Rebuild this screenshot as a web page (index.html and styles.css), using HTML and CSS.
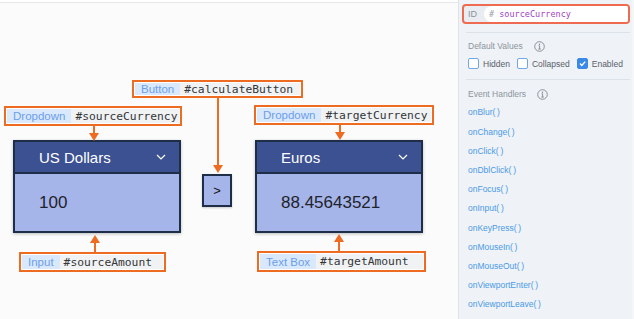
FILE: index.html
```html
<!DOCTYPE html>
<html>
<head>
<meta charset="utf-8">
<link rel="stylesheet" href="styles.css">
</head>
<body>
<div class="app">
  <main class="canvas">
    <div class="ruler"></div>

    <div class="tag tag-btn"><span class="tag-type">Button</span><span class="tag-id">#calculateButton</span></div>
    <div class="tag tag-src"><span class="tag-type">Dropdown</span><span class="tag-id">#sourceCurrency</span></div>
    <div class="tag tag-tgt"><span class="tag-type">Dropdown</span><span class="tag-id">#targetCurrency</span></div>
    <div class="tag tag-inp"><span class="tag-type">Input</span><span class="tag-id">#sourceAmount</span></div>
    <div class="tag tag-tb"><span class="tag-type">Text Box</span><span class="tag-id">#targetAmount</span></div>

    <div class="comp comp-src">
      <div class="comp-head"><span>US Dollars</span><svg class="chev" width="10" height="6" viewBox="0 0 10 6"><polyline points="1,1 5,5 9,1" fill="none" stroke="#fff" stroke-width="1.2"/></svg></div>
      <div class="comp-body">100</div>
    </div>

    <div class="calc-btn">&gt;</div>

    <div class="comp comp-tgt">
      <div class="comp-head"><span>Euros</span><svg class="chev" width="10" height="6" viewBox="0 0 10 6"><polyline points="1,1 5,5 9,1" fill="none" stroke="#fff" stroke-width="1.2"/></svg></div>
      <div class="comp-body">88.45643521</div>
    </div>

    <svg class="arrows" width="458" height="319" viewBox="0 0 458 319">
      <g stroke="#ee6b22" stroke-width="2">
        <line x1="94" y1="125" x2="94" y2="134"/>
        <line x1="218" y1="97" x2="218" y2="166"/>
        <line x1="340" y1="125" x2="340" y2="133"/>
        <line x1="95" y1="243" x2="95" y2="252"/>
        <line x1="339" y1="242" x2="339" y2="251"/>
      </g>
      <g fill="#ee6b22">
        <polygon points="89,133 99,133 94,141"/>
        <polygon points="213,165 223,165 218,173"/>
        <polygon points="335,132 345,132 340,140"/>
        <polygon points="90,243 100,243 95,235"/>
        <polygon points="334,242 344,242 339,234"/>
      </g>
    </svg>
  </main>

  <aside class="panel">
    <div class="id-field">
      <span class="id-label">ID</span>
      <div class="id-input"><span class="hash"># </span><span class="id-value">sourceCurrency</span></div>
    </div>

    <section class="group group-defaults">
      <div class="group-title">Default Values
        <svg class="info" width="11" height="11" viewBox="0 0 11 11"><circle cx="5.5" cy="5.5" r="4.8" fill="none" stroke="#7f8891" stroke-width="0.9"/><circle cx="5.5" cy="3.2" r="0.7" fill="#7f8891"/><path d="M4.6 4.8H5.6V8M4.3 8.1H6.8" fill="none" stroke="#7f8891" stroke-width="0.9"/></svg>
      </div>
      <div class="checks">
        <label class="check"><span class="box"></span>Hidden</label>
        <label class="check"><span class="box"></span>Collapsed</label>
        <label class="check"><span class="box box-on"><svg width="9" height="9" viewBox="0 0 9 9"><polyline points="2,4.6 3.8,6.4 7.2,2.6" fill="none" stroke="#fff" stroke-width="1.4"/></svg></span>Enabled</label>
      </div>
    </section>

    <section class="group group-events">
      <div class="group-title">Event Handlers
        <svg class="info" width="11" height="11" viewBox="0 0 11 11"><circle cx="5.5" cy="5.5" r="4.8" fill="none" stroke="#7f8891" stroke-width="0.9"/><circle cx="5.5" cy="3.2" r="0.7" fill="#7f8891"/><path d="M4.6 4.8H5.6V8M4.3 8.1H6.8" fill="none" stroke="#7f8891" stroke-width="0.9"/></svg>
      </div>
      <ul class="handlers">
        <li>onBlur(&#8201;)</li>
        <li>onChange(&#8201;)</li>
        <li>onClick(&#8201;)</li>
        <li>onDblClick(&#8201;)</li>
        <li>onFocus(&#8201;)</li>
        <li>onInput(&#8201;)</li>
        <li>onKeyPress(&#8201;)</li>
        <li>onMouseIn(&#8201;)</li>
        <li>onMouseOut(&#8201;)</li>
        <li>onViewportEnter(&#8201;)</li>
        <li>onViewportLeave(&#8201;)</li>
      </ul>
    </section>
  </aside>
</div>
</body>
</html>
```

FILE: styles.css
```css
* { box-sizing: border-box; }
html, body { margin: 0; padding: 0; }
body {
  width: 634px;
  height: 319px;
  overflow: hidden;
  font-family: "Liberation Sans", Arial, sans-serif;
  background: #fcfcfc;
}
.app {
  display: flex;
  width: 634px;
  height: 319px;
}

/* ---------- canvas ---------- */
.canvas {
  position: relative;
  width: 459px;
  height: 319px;
  background: #fbfbfb;
  border-right: 1px solid #dfe2e6;
}
.ruler {
  height: 3px;
  background: #ffffff;
  border-bottom: 1px solid #e6e7e8;
}

.tag {
  position: absolute;
  display: flex;
  height: 20px;
  border: 2px solid #ee6b22;
  padding: 1px;
  background: #fff;
}
.tag-type {
  display: flex;
  align-items: center;
  padding: 0 6px;
  background: #dae8fb;
  color: #6a9fea;
  font-family: "Liberation Sans", Arial, sans-serif;
  font-size: 11.5px;
}
.tag-id {
  flex: 1;
  display: flex;
  align-items: center;
  padding-left: 4px;
  background: #f1f2f3;
  color: #333639;
  font-family: "DejaVu Sans Mono", "Liberation Mono", monospace;
  font-size: 11.3px;
  white-space: nowrap;
}
.tag-btn { left: 132px; top: 80px; width: 171px; height: 18px; }
.tag-src { left: 4px; top: 106px; width: 178px; }
.tag-tgt { left: 254px; top: 105px; width: 180px; }
.tag-inp { left: 19px; top: 252px; width: 147px; }
.tag-tb  { left: 257px; top: 251px; width: 169px; height: 21px; }

.comp {
  position: absolute;
  top: 140px;
  width: 168px;
  height: 93px;
  display: flex;
  flex-direction: column;
  border: 2px solid #1e2d48;
  box-shadow: 0 1px 3px rgba(0, 0, 0, 0.25);
}
.comp-src { left: 13px; }
.comp-tgt { left: 255px; }
.comp-head {
  height: 32px;
  display: flex;
  align-items: center;
  justify-content: space-between;
  padding: 0 13px 0 24px;
  background: #3c5192;
  border-bottom: 2px solid #1e2d48;
  color: #ffffff;
  font-size: 15px;
}
.chev { display: block; }
.comp-body {
  flex: 1;
  display: flex;
  align-items: center;
  padding-left: 24px;
  background: #a5b4e9;
  color: #1f232b;
  font-size: 17px;
}

.calc-btn {
  position: absolute;
  left: 202px;
  top: 174px;
  width: 30px;
  height: 33px;
  display: flex;
  align-items: center;
  justify-content: center;
  border: 2px solid #1e2d48;
  background: #a5b4e9;
  color: #111;
  font-size: 13px;
  box-shadow: 0 1px 2px rgba(0, 0, 0, 0.2);
}

.arrows {
  position: absolute;
  left: 0;
  top: 0;
  pointer-events: none;
}

/* ---------- panel ---------- */
.panel {
  width: 175px;
  height: 319px;
  padding: 4px 2px 0 3px;
  background: #eff2f6;
  border-right: 2px solid #f5f6f8;
  font-size: 8.5px;
}
.id-field {
  display: flex;
  height: 20px;
  border: 2px solid #ee6a50;
  border-radius: 4px;
  background: #e9edf1;
  overflow: hidden;
}
.id-label {
  width: 20px;
  padding-left: 4px;
  display: flex;
  align-items: center;
  color: #8a929b;
  font-size: 9px;
}
.id-input {
  flex: 1;
  display: flex;
  align-items: center;
  padding-left: 5px;
  background: #ffffff;
  border-radius: 8px 0 0 8px;
  font-family: "DejaVu Sans Mono", "Liberation Mono", monospace;
  font-size: 8.5px;
  white-space: pre;
}
.hash { color: #9aa1a9; }
.id-value { color: #a03fc4; }

.group {
  margin-left: 4px;
  padding-left: 2px;
  border-top: 1px solid #dce2e9;
}
.group-defaults { margin-top: 8px; padding-top: 6px; padding-bottom: 10px; }
.group-events { padding-top: 7px; }
.group-title {
  height: 14px;
  display: flex;
  align-items: center;
  gap: 11px;
  color: #8c959e;
}
.info { display: block; }

.checks {
  margin-top: 5px;
  height: 11px;
  display: flex;
  align-items: center;
  gap: 7px;
}
.check {
  display: flex;
  align-items: center;
  gap: 4px;
  color: #58616a;
}
.box {
  width: 11px;
  height: 11px;
  border: 1px solid #6fa8e6;
  border-radius: 2px;
  background: #ffffff;
  display: flex;
  align-items: center;
  justify-content: center;
}
.box-on {
  background: #3a89e6;
  border-color: #3a89e6;
}
.box svg { display: block; }

.handlers {
  list-style: none;
  margin: 2.4px 0 0;
  padding: 0;
}
.handlers li {
  height: 19.2px;
  line-height: 19.2px;
  color: #4a9ae7;
}
```
